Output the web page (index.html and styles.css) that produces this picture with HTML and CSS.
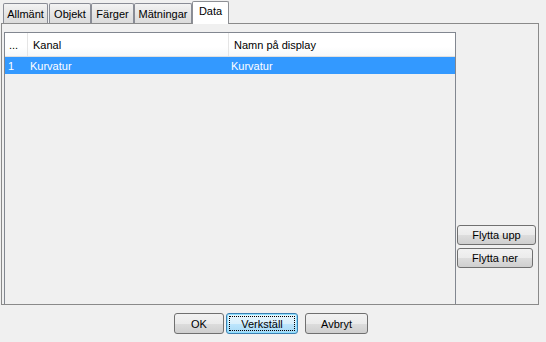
FILE: index.html
```html
<!DOCTYPE html>
<html>
<head>
<meta charset="utf-8">
<link rel="stylesheet" href="styles.css">
</head>
<body>
<div class="window">
  <div class="tabs">
    <div class="tab t1">Allmänt</div>
    <div class="tab t2">Objekt</div>
    <div class="tab t3">Färger</div>
    <div class="tab t4">Mätningar</div>
    <div class="tab active">Data</div>
  </div>
  <div class="panel">
    <div class="table">
      <div class="thead">
        <div class="th c1">...</div>
        <div class="th c2">Kanal</div>
        <div class="th c3">Namn på display</div>
      </div>
      <div class="row selected">
        <div class="td c1">1</div>
        <div class="td c2">Kurvatur</div>
        <div class="td c3">Kurvatur</div>
      </div>
    </div>
    <div class="side">
      <button class="btn up">Flytta upp</button>
      <button class="btn down">Flytta ner</button>
    </div>
  </div>
  <div class="footer">
    <button class="btn ok">OK</button>
    <button class="btn apply"><span class="focus">Verkställ</span></button>
    <button class="btn cancel">Avbryt</button>
  </div>
</div>
</body>
</html>
```

FILE: styles.css
```css
html, body {
  margin: 0;
  padding: 0;
}
body {
  width: 546px;
  height: 342px;
  background: #f0f0f0;
  font-family: "Liberation Sans", Arial, sans-serif;
  font-size: 11px;
  color: #000;
  overflow: hidden;
}
.window {
  display: flex;
  flex-direction: column;
  height: 342px;
}
.tabs {
  display: flex;
  align-items: flex-end;
  height: 24px;
  padding-left: 3px;
  position: relative;
  z-index: 2;
}
.tab {
  box-sizing: border-box;
  height: 20px;
  margin-bottom: 1px;
  border: 1px solid #898c95;
  border-bottom: none;
  border-radius: 2px 2px 0 0;
  background: linear-gradient(#f3f3f3, #e3e3e3 60%, #dcdcdc);
  display: flex;
  align-items: center;
  justify-content: center;
  line-height: 1;
  padding-top: 1px;
}
.t1 { width: 45px; }
.t2 { width: 42px; margin-left: 1px; }
.t3 { width: 43px; margin-left: 0; }
.t4 { width: 58px; margin-left: 0; }
.tab.active {
  width: 37px;
  height: 23px;
  margin-bottom: 0;
  margin-left: 0;
  background: #fff;
  border-color: #8d8f94;
  padding-bottom: 4px;
}
.panel {
  box-sizing: border-box;
  margin-left: 1px;
  width: 538px;
  height: 282px;
  margin-top: -1px;
  border: 1px solid #8a8a8a;
  background: #f0f0f0;
  display: flex;
  padding: 8px 0 0 2px;
}
.table {
  box-sizing: border-box;
  width: 452px;
  border: 1px solid #828790;
  border-bottom: none;
  background: #f0f0f0;
}
.thead {
  display: flex;
  height: 23px;
  background: linear-gradient(#ffffff, #ffffff 60%, #f7f8f9);
  border-bottom: 1px solid #e0e0e0;
}
.th, .td {
  box-sizing: border-box;
  display: flex;
  align-items: center;
  white-space: nowrap;
}
.thead .c1 { width: 23px; padding-left: 4px; border-right: 1px solid #e5e5e5; }
.thead .c2 { width: 201px; padding-left: 5px; border-right: 1px solid #e5e5e5; }
.thead .c3 { flex: 1; padding-left: 5px; }
.row {
  display: flex;
  height: 17px;
}
.row.selected {
  background: #3399ff;
  color: #fff;
}
.row .c1 { width: 23px; padding-left: 3px; }
.row .c2 { width: 201px; padding-left: 2px; }
.row .c3 { flex: 1; padding-left: 2px; }
.side {
  flex: 1;
  display: flex;
  flex-direction: column;
  justify-content: flex-end;
  align-items: flex-start;
  padding: 0 0 36px 1px;
  gap: 3px;
}
.btn {
  box-sizing: border-box;
  font-family: "Liberation Sans", Arial, sans-serif;
  font-size: 11px;
  color: #000;
  height: 20px;
  border: 1px solid #707070;
  border-radius: 3px;
  background: linear-gradient(#f2f2f2 0%, #ebebeb 50%, #dddddd 51%, #cfcfcf 100%);
  padding: 0;
  margin: 0;
  display: flex;
  align-items: center;
  justify-content: center;
}
.up { width: 79px; }
.down { width: 76px; }
.footer {
  display: flex;
  align-items: flex-start;
  padding: 8px 0 0 174px;
}
.footer .btn { height: 21px; }
.ok { width: 50px; }
.apply {
  width: 72px;
  margin-left: 2px;
  border-color: #3c7fb1;
  background: linear-gradient(#eaf6fd 0%, #d9f0fc 50%, #bee6fd 51%, #a7d9f5 100%);
  box-shadow: inset 0 0 0 1px #8ee0ff;
  padding: 2px;
}
.focus {
  box-sizing: border-box;
  display: flex;
  align-items: center;
  justify-content: center;
  width: 100%;
  height: 100%;
  border: 1px dotted #000;
}
.cancel { width: 63px; margin-left: 7px; }
```
